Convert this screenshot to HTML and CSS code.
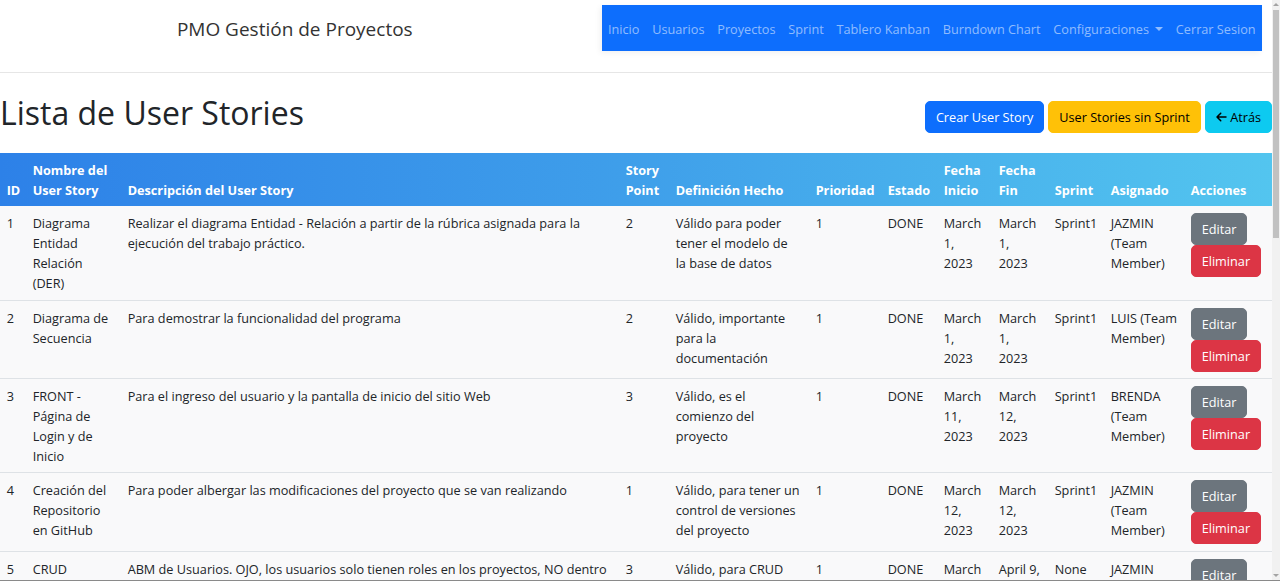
FILE: index.html
```html
<!DOCTYPE html>
<html lang="es">
<head>
<meta charset="utf-8">
<title>PMO Gestión de Proyectos</title>
<link rel="stylesheet" href="styles.css">
</head>
<body>
<div class="page">
  <header class="topbar">
    <div class="brand">PMO Gestión de Proyectos</div>
    <nav class="mainnav">
      <a href="#">Inicio</a>
      <a href="#">Usuarios</a>
      <a href="#">Proyectos</a>
      <a href="#">Sprint</a>
      <a href="#">Tablero Kanban</a>
      <a href="#">Burndown Chart</a>
      <a href="#" class="dropdown">Configuraciones</a>
      <a href="#">Cerrar Sesion</a>
    </nav>
  </header>

  <main class="content">
    <div class="titlebar">
      <h1>Lista de User Stories</h1>
      <div class="actions">
        <a href="#" class="btn btn-primary">Crear User Story</a>
        <a href="#" class="btn btn-warning">User Stories sin Sprint</a>
        <a href="#" class="btn btn-info"><svg class="arrow" viewBox="0 0 448 512" aria-hidden="true"><path d="M9.4 233.4c-12.5 12.5-12.5 32.8 0 45.3l160 160c12.5 12.5 32.8 12.5 45.3 0s12.5-32.8 0-45.3L109.2 288 416 288c17.7 0 32-14.3 32-32s-14.3-32-32-32l-306.7 0L214.6 118.6c12.5-12.5 12.5-32.8 0-45.3s-32.8-12.5-45.3 0l-160 160z"/></svg> Atrás</a>
      </div>
    </div>

    <table class="stories">
      <colgroup>
        <col class="c-id"><col class="c-name"><col class="c-desc"><col class="c-sp"><col class="c-def"><col class="c-prio"><col class="c-est"><col class="c-fi"><col class="c-ff"><col class="c-spr"><col class="c-asig"><col class="c-acc">
      </colgroup>
      <thead>
        <tr>
          <th>ID</th>
          <th>Nombre del User Story</th>
          <th>Descripción del User Story</th>
          <th>Story Point</th>
          <th>Definición Hecho</th>
          <th>Prioridad</th>
          <th>Estado</th>
          <th>Fecha Inicio</th>
          <th>Fecha Fin</th>
          <th>Sprint</th>
          <th>Asignado</th>
          <th>Acciones</th>
        </tr>
      </thead>
      <tbody>
        <tr>
          <td>1</td>
          <td>Diagrama Entidad Relación (DER)</td>
          <td>Realizar el diagrama Entidad - Relación a partir de la rúbrica asignada para la ejecución del trabajo práctico.</td>
          <td>2</td>
          <td class="def">Válido para poder tener el modelo de la base de datos</td>
          <td>1</td>
          <td>DONE</td>
          <td>March 1, 2023</td>
          <td>March 1, 2023</td>
          <td>Sprint1</td>
          <td>JAZMIN (Team Member)</td>
          <td><div class="row-actions"><a href="#" class="btn btn-secondary">Editar</a><a href="#" class="btn btn-danger">Eliminar</a></div></td>
        </tr>
        <tr>
          <td>2</td>
          <td>Diagrama de Secuencia</td>
          <td>Para demostrar la funcionalidad del programa</td>
          <td>2</td>
          <td class="def">Válido, importante para la documentación</td>
          <td>1</td>
          <td>DONE</td>
          <td>March 1, 2023</td>
          <td>March 1, 2023</td>
          <td>Sprint1</td>
          <td>LUIS (Team Member)</td>
          <td><div class="row-actions"><a href="#" class="btn btn-secondary">Editar</a><a href="#" class="btn btn-danger">Eliminar</a></div></td>
        </tr>
        <tr>
          <td>3</td>
          <td>FRONT - Página de Login y de Inicio</td>
          <td>Para el ingreso del usuario y la pantalla de inicio del sitio Web</td>
          <td>3</td>
          <td class="def">Válido, es el comienzo del proyecto</td>
          <td>1</td>
          <td>DONE</td>
          <td>March 11, 2023</td>
          <td>March 12, 2023</td>
          <td>Sprint1</td>
          <td>BRENDA (Team Member)</td>
          <td><div class="row-actions"><a href="#" class="btn btn-secondary">Editar</a><a href="#" class="btn btn-danger">Eliminar</a></div></td>
        </tr>
        <tr>
          <td>4</td>
          <td>Creación del Repositorio en GitHub</td>
          <td>Para poder albergar las modificaciones del proyecto que se van realizando</td>
          <td>1</td>
          <td class="def">Válido, para tener un control de versiones del proyecto</td>
          <td>1</td>
          <td>DONE</td>
          <td>March 12, 2023</td>
          <td>March 12, 2023</td>
          <td>Sprint1</td>
          <td>JAZMIN (Team Member)</td>
          <td><div class="row-actions"><a href="#" class="btn btn-secondary">Editar</a><a href="#" class="btn btn-danger">Eliminar</a></div></td>
        </tr>
        <tr>
          <td>5</td>
          <td>CRUD Usuarios</td>
          <td>ABM de Usuarios. OJO, los usuarios solo tienen roles en los proyectos, NO dentro de la aplicación.</td>
          <td>3</td>
          <td class="def">Válido, para CRUD</td>
          <td>1</td>
          <td>DONE</td>
          <td>March 26, 2023</td>
          <td>April 9, 2023</td>
          <td>None</td>
          <td>JAZMIN (Team Member)</td>
          <td><div class="row-actions"><a href="#" class="btn btn-secondary">Editar</a><a href="#" class="btn btn-danger">Eliminar</a></div></td>
        </tr>
      </tbody>
    </table>
  </main>
</div>

<div class="scrollbar" aria-hidden="true">
  <span class="sb-up"></span>
  <span class="sb-thumb"></span>
  <span class="sb-down"></span>
</div>
<div class="window-edge" aria-hidden="true"></div>
</body>
</html>
```

FILE: styles.css
```css
* { box-sizing: border-box; }

html, body {
  margin: 0;
  height: 100%;
  overflow: hidden;
  background: #fff;
}

body {
  font-family: "Open Sans", "Noto Sans", sans-serif;
  font-size: 12.7px;
  line-height: 20px;
  color: #212529;
}

a { text-decoration: none; }

.page {
  margin-right: 8px;
}

/* ---------- top bar ---------- */
.topbar {
  display: flex;
  align-items: flex-start;
  height: 73px;
  padding-top: 5px;
  border-bottom: 1px solid #e6e6e6;
}

.brand {
  flex: 1;
  padding-right: 12px;
  text-align: center;
  font-size: 19px;
  line-height: 48px;
  color: #333;
}

.mainnav {
  display: flex;
  align-items: center;
  height: 46px;
  margin-right: 10px;
  padding-top: 2px;
  background: #0d6efd;
  box-shadow: -2px 2px 6px rgba(0, 0, 0, 0.06);
}

.mainnav a {
  padding: 0 6.42px;
  color: rgba(255, 255, 255, 0.55);
  white-space: nowrap;
}

.mainnav .dropdown::after {
  content: "";
  display: inline-block;
  margin-left: 6px;
  vertical-align: 3px;
  border-top: 4px solid;
  border-left: 4px solid transparent;
  border-right: 4px solid transparent;
}

/* ---------- title bar ---------- */
.titlebar {
  display: flex;
  justify-content: space-between;
  align-items: flex-start;
  padding: 20px 0 20px 0;
}

.titlebar h1 {
  margin: 0;
  font-size: 32px;
  line-height: 40px;
  font-weight: 500;
  color: #212529;
}

.actions {
  display: flex;
  gap: 4px;
  margin-top: 8px;
}

/* ---------- buttons ---------- */
.btn {
  display: inline-block;
  padding: 5px 10px;
  border: 1px solid transparent;
  border-radius: 5px;
  font-size: 12.7px;
  line-height: 20px;
  white-space: nowrap;
}

.btn-primary { background: #0d6efd; border-color: #0d6efd; color: #fff; }
.btn-warning { background: #ffc107; border-color: #ffc107; color: #000; }
.btn-info { background: #0dcaf0; border-color: #0dcaf0; color: #000; }
.btn-secondary { background: #6c757d; border-color: #6c757d; color: #fff; }
.btn-danger { background: #dc3545; border-color: #dc3545; color: #fff; }

.arrow {
  width: 11px;
  height: 12px;
  vertical-align: -1px;
  fill: currentColor;
}

/* ---------- table ---------- */
.stories {
  width: 100%;
  table-layout: fixed;
  border-collapse: collapse;
}

.c-id { width: 26px; }
.c-name { width: 95px; }
.c-desc { width: 498px; }
.c-sp { width: 50px; }
.c-def { width: 140px; }
.c-prio { width: 72px; }
.c-est { width: 56px; }
.c-fi { width: 55px; }
.c-ff { width: 56px; }
.c-spr { width: 56px; }
.c-asig { width: 80px; }
.c-acc { width: 88px; }

.stories thead tr {
  background: linear-gradient(90deg, #2d81e8 0%, #3f9fea 50%, #53c5ef 100%);
}

.stories th {
  padding: 6.67px;
  text-align: left;
  vertical-align: bottom;
  font-weight: 700;
  color: #fff;
}

.stories td {
  padding: 7px 6.67px 6.33px;
  vertical-align: top;
  background: #f9f9fa;
  border-bottom: 1px solid #dee2e6;
}

.stories td.def {
  padding-right: 8.9px;
}

.row-actions {
  display: flex;
  flex-direction: column;
  align-items: flex-start;
}

/* ---------- fake window scrollbar ---------- */
.scrollbar {
  position: fixed;
  top: 0;
  right: 0;
  width: 8px;
  height: 100%;
  background: #f1f1f1;
}

.sb-thumb {
  position: absolute;
  left: 1px;
  right: 1px;
  top: 10px;
  height: 228px;
  background: #c1c1c1;
}

.sb-up, .sb-down {
  position: absolute;
  left: 1px;
  border-left: 3px solid transparent;
  border-right: 3px solid transparent;
}

.sb-up { top: 3px; border-bottom: 3px solid #a3a3a3; }
.sb-down { bottom: 4px; border-top: 3px solid #a3a3a3; }

.window-edge {
  position: fixed;
  left: 0;
  right: 0;
  bottom: 0;
  height: 1px;
  background: #8a8a8a;
}
```
